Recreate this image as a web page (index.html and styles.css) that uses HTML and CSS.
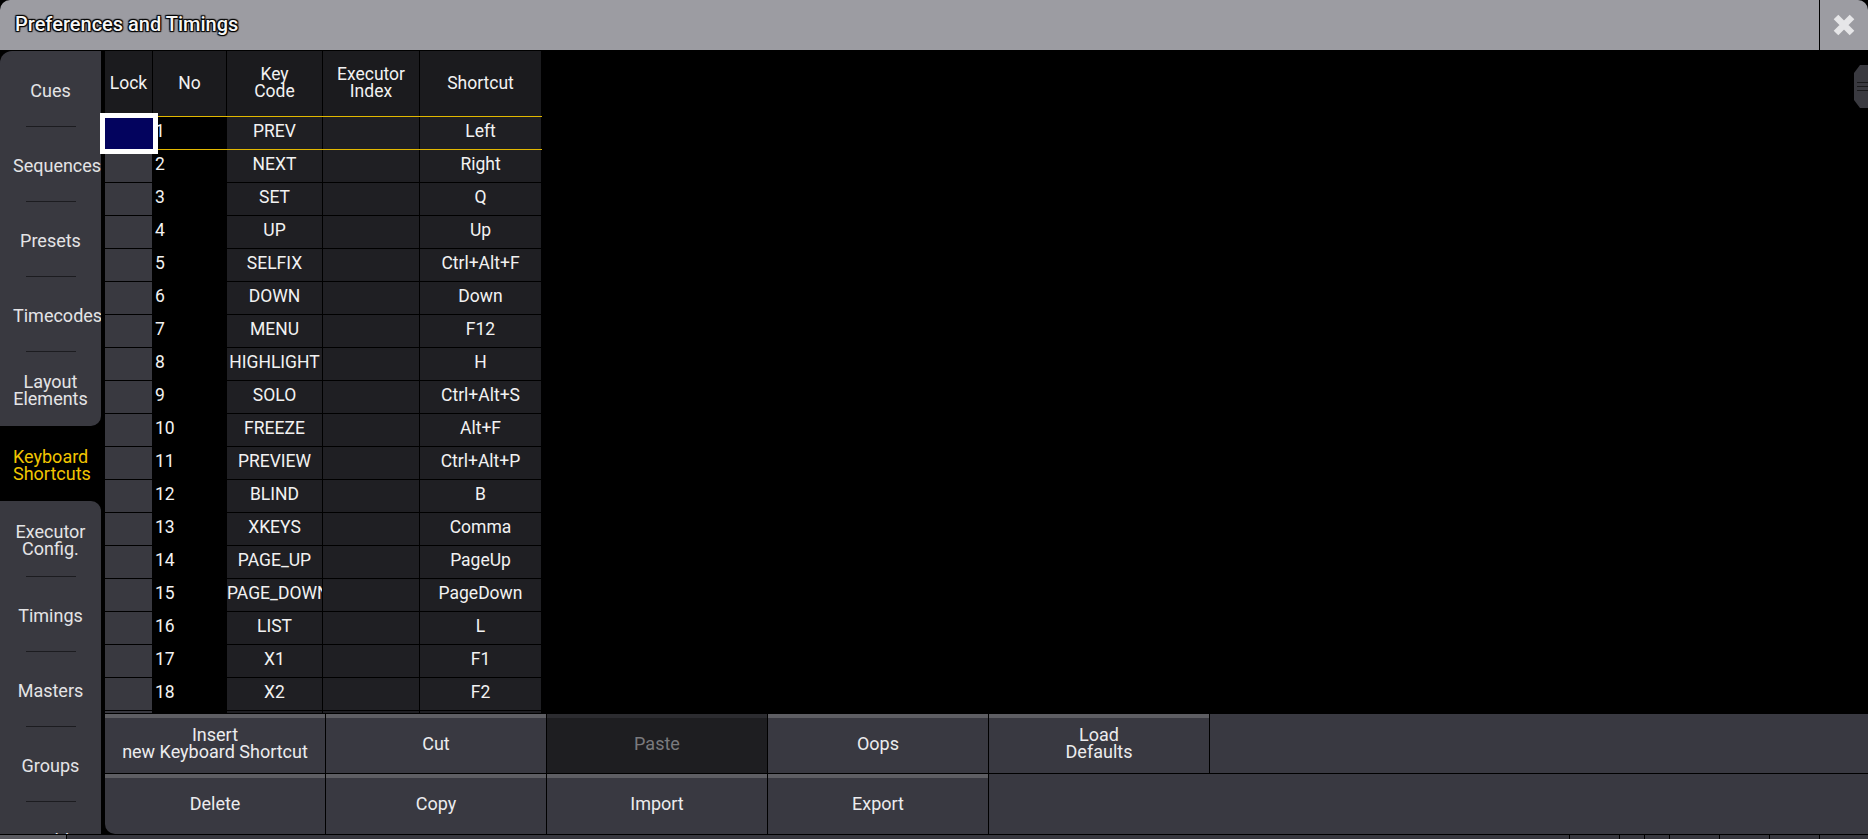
FILE: index.html
```html
<!DOCTYPE html>
<html lang="en">
<head>
    <meta charset="UTF-8">
    <title>Preferences and Timings</title>
    <link rel="stylesheet" href="styles.css">
</head>
<body>
<div class="window">
    <div class="titlebar">
        <h1 class="title">Preferences and Timings</h1>
        <a href="javascript:;" class="close">
            <svg width="24" height="24" viewBox="0 0 24 24">
                <path d="M4 4 L20 20 M20 4 L4 20" stroke="#e6e6e8" stroke-width="6.5" fill="none"/>
            </svg>
        </a>
    </div>

    <div class="main">
        <div class="tabs">
            <div class="tab-group upper">
                <div class="tab">Cues</div>
                <div class="tab">Sequences</div>
                <div class="tab">Presets</div>
                <div class="tab">Timecodes</div>
                <div class="tab">Layout<br>Elements</div>
            </div>
            <div class="tab active">Keyboard<br>Shortcuts</div>
            <div class="tab-group lower">
                <div class="tab">Executor<br>Config.</div>
                <div class="tab">Timings</div>
                <div class="tab">Masters</div>
                <div class="tab">Groups</div>
                <div class="tab">Worlds</div>
            </div>
        </div>

        <div class="content">
            <div class="sheet">
                <div class="grid">
                    <div class="row head">
                        <div class="cell">Lock</div>
                        <div class="cell">No</div>
                        <div class="cell">Key<br>Code</div>
                        <div class="cell">Executor<br>Index</div>
                        <div class="cell">Shortcut</div>
                    </div>
                    <div class="row selected">
                        <div class="cell lock"><span class="focus"></span></div>
                        <div class="cell no">1</div>
                        <div class="cell">PREV</div>
                        <div class="cell"></div>
                        <div class="cell">Left</div>
                    </div>
                    <div class="row">
                        <div class="cell lock"></div>
                        <div class="cell no">2</div>
                        <div class="cell">NEXT</div>
                        <div class="cell"></div>
                        <div class="cell">Right</div>
                    </div>
                    <div class="row">
                        <div class="cell lock"></div>
                        <div class="cell no">3</div>
                        <div class="cell">SET</div>
                        <div class="cell"></div>
                        <div class="cell">Q</div>
                    </div>
                    <div class="row">
                        <div class="cell lock"></div>
                        <div class="cell no">4</div>
                        <div class="cell">UP</div>
                        <div class="cell"></div>
                        <div class="cell">Up</div>
                    </div>
                    <div class="row">
                        <div class="cell lock"></div>
                        <div class="cell no">5</div>
                        <div class="cell">SELFIX</div>
                        <div class="cell"></div>
                        <div class="cell">Ctrl+Alt+F</div>
                    </div>
                    <div class="row">
                        <div class="cell lock"></div>
                        <div class="cell no">6</div>
                        <div class="cell">DOWN</div>
                        <div class="cell"></div>
                        <div class="cell">Down</div>
                    </div>
                    <div class="row">
                        <div class="cell lock"></div>
                        <div class="cell no">7</div>
                        <div class="cell">MENU</div>
                        <div class="cell"></div>
                        <div class="cell">F12</div>
                    </div>
                    <div class="row">
                        <div class="cell lock"></div>
                        <div class="cell no">8</div>
                        <div class="cell">HIGHLIGHT</div>
                        <div class="cell"></div>
                        <div class="cell">H</div>
                    </div>
                    <div class="row">
                        <div class="cell lock"></div>
                        <div class="cell no">9</div>
                        <div class="cell">SOLO</div>
                        <div class="cell"></div>
                        <div class="cell">Ctrl+Alt+S</div>
                    </div>
                    <div class="row">
                        <div class="cell lock"></div>
                        <div class="cell no">10</div>
                        <div class="cell">FREEZE</div>
                        <div class="cell"></div>
                        <div class="cell">Alt+F</div>
                    </div>
                    <div class="row">
                        <div class="cell lock"></div>
                        <div class="cell no">11</div>
                        <div class="cell">PREVIEW</div>
                        <div class="cell"></div>
                        <div class="cell">Ctrl+Alt+P</div>
                    </div>
                    <div class="row">
                        <div class="cell lock"></div>
                        <div class="cell no">12</div>
                        <div class="cell">BLIND</div>
                        <div class="cell"></div>
                        <div class="cell">B</div>
                    </div>
                    <div class="row">
                        <div class="cell lock"></div>
                        <div class="cell no">13</div>
                        <div class="cell">XKEYS</div>
                        <div class="cell"></div>
                        <div class="cell">Comma</div>
                    </div>
                    <div class="row">
                        <div class="cell lock"></div>
                        <div class="cell no">14</div>
                        <div class="cell">PAGE_UP</div>
                        <div class="cell"></div>
                        <div class="cell">PageUp</div>
                    </div>
                    <div class="row">
                        <div class="cell lock"></div>
                        <div class="cell no">15</div>
                        <div class="cell">PAGE_DOWN</div>
                        <div class="cell"></div>
                        <div class="cell">PageDown</div>
                    </div>
                    <div class="row">
                        <div class="cell lock"></div>
                        <div class="cell no">16</div>
                        <div class="cell">LIST</div>
                        <div class="cell"></div>
                        <div class="cell">L</div>
                    </div>
                    <div class="row">
                        <div class="cell lock"></div>
                        <div class="cell no">17</div>
                        <div class="cell">X1</div>
                        <div class="cell"></div>
                        <div class="cell">F1</div>
                    </div>
                    <div class="row">
                        <div class="cell lock"></div>
                        <div class="cell no">18</div>
                        <div class="cell">X2</div>
                        <div class="cell"></div>
                        <div class="cell">F2</div>
                    </div>
                    <div class="row">
                        <div class="cell lock"></div>
                        <div class="cell no">19</div>
                        <div class="cell">X3</div>
                        <div class="cell"></div>
                        <div class="cell">F3</div>
                    </div>
                </div>
                <div class="handle">
                    <i></i><i></i><i></i>
                </div>
            </div>

            <div class="actions">
                <div class="btn">Insert<br>new Keyboard Shortcut</div>
                <div class="btn">Cut</div>
                <div class="btn disabled">Paste</div>
                <div class="btn">Oops</div>
                <div class="btn">Load<br>Defaults</div>
                <div class="filler"></div>
                <div class="btn">Delete</div>
                <div class="btn">Copy</div>
                <div class="btn">Import</div>
                <div class="btn">Export</div>
                <div class="filler wide"></div>
            </div>
        </div>
    </div>

    <div class="statusbar">
        <span class="seg first"></span>
        <span class="seg grow"></span>
        <span class="seg w50"></span>
        <span class="seg w25"></span>
        <span class="seg w25"></span>
        <span class="seg w50"></span>
        <span class="seg w50"></span>
        <span class="seg w50"></span>
        <span class="seg w48"></span>
    </div>
</div>
</body>
</html>
```

FILE: styles.css
```css
* {
    margin: 0;
    padding: 0;
    box-sizing: border-box;
}

a {
    text-decoration: none;
}

body {
    background-color: #000;
    color: #ececee;
    font-family: Roboto, "Liberation Sans", sans-serif;
    font-size: 18px;
    overflow: hidden;
    -webkit-user-select: none;
    user-select: none;
}

.window {
    width: 1868px;
    height: 839px;
    display: flex;
    flex-direction: column;
}

/* title bar */
.titlebar {
    flex: none;
    height: 50px;
    display: flex;
    align-items: center;
    background-color: #9c9ca2;
    border-radius: 10px 10px 0 0;
}

.title {
    flex: 1;
    padding: 0 0 2px 15px;
    font-size: 20px;
    font-weight: 500;
    color: #f6f6f6;
    text-shadow: 0 0 2px #000, 1px 1px 1px #000, -1px -1px 1px #000, 1px -1px 1px #000, -1px 1px 1px #000;
}

.close {
    width: 49px;
    height: 50px;
    display: flex;
    align-items: center;
    justify-content: center;
    border-left: 1px solid #000;
}

/* body */
.main {
    flex: 1;
    min-height: 0;
    margin-top: 1px;
    display: flex;
    gap: 4px;
}

.tabs {
    width: 101px;
    flex: none;
    display: flex;
    flex-direction: column;
    overflow: hidden;
}

.tab-group {
    flex: none;
    background-color: #393940;
}

.tab-group.upper {
    border-radius: 12px 0 10px 0;
}

.tab-group.lower {
    flex: 1;
    min-height: 0;
    overflow: hidden;
    border-radius: 0 10px 0 0;
}

/* long labels spill to the right, like the console does */
.tab {
    position: relative;
    flex: none;
    height: 75px;
    padding: 3px 13px 0;
    display: flex;
    flex-direction: column;
    justify-content: center;
    text-align: center;
    white-space: nowrap;
    line-height: 17px;
    color: #e4e4e6;
}

.tab + .tab::before {
    content: "";
    position: absolute;
    top: 0;
    left: 26px;
    width: 50px;
    height: 1px;
    background-color: #1c1c20;
}

.tab.active {
    background-color: #000;
    color: #f2c500;
}

.content {
    flex: 1;
    min-width: 0;
    display: flex;
    flex-direction: column;
}

/* shortcut table; pulled left so the focus frame can overhang the lock column */
.sheet {
    position: relative;
    flex: none;
    height: 662px;
    margin-left: -5px;
    padding-left: 5px;
    overflow: hidden;
}

.grid {
    width: 437px;
    display: flex;
    flex-direction: column;
    gap: 1px;
}

.row {
    position: relative;
    display: grid;
    grid-template-columns: 47px 73px 95px 96px 121px;
    gap: 1px;
    width: 436px;
    height: 32px;
    flex: none;
    background-color: #000;
    font-size: 17.5px;
}

.row.head {
    height: 65px;
}

.cell {
    background-color: #1f1f23;
    color: #f2f2f2;
    text-align: center;
    line-height: 28px;
    padding-bottom: 4px;
    white-space: nowrap;
    overflow: hidden;
}

.head .cell {
    display: flex;
    align-items: center;
    justify-content: center;
    background-color: #1b1b1e;
    line-height: 17px;
    padding-bottom: 1px;
}

.cell.lock {
    background-color: #393940;
}

.cell.no {
    background-color: #000;
    text-align: left;
    padding-left: 2px;
}

.row.selected {
    box-shadow: 0 -1px 0 #e2b800, 0 1px 0 #e2b800;
    width: 437px;
}

.row.selected .cell.lock {
    overflow: visible;
}

.focus {
    position: absolute;
    left: -5px;
    top: -4px;
    width: 58px;
    height: 41px;
    border: 5px solid #fff;
    background-color: #03035e;
    z-index: 2;
}

.handle {
    position: absolute;
    top: 14px;
    right: 0;
    width: 14px;
    height: 43px;
    padding: 17px 0 0 3px;
    background-color: #3a3a40;
    clip-path: polygon(6px 0, 100% 0, 100% 100%, 6px 100%, 0 calc(100% - 8px), 0 8px);
}

.handle i {
    display: block;
    height: 1px;
    margin-bottom: 3px;
    background-color: #1a1a1c;
}

/* button strip */
.actions {
    flex: 1;
    margin-top: 1px;
    display: grid;
    grid-template-columns: repeat(5, 220px) 1fr;
    grid-template-rows: 59px 60px;
    gap: 1px;
    background-color: #000;
    border-radius: 0 0 0 10px;
    overflow: hidden;
}

.btn {
    display: flex;
    align-items: center;
    justify-content: center;
    text-align: center;
    line-height: 17px;
    padding-bottom: 5px;
    background-color: #393941;
    border-top: 4px solid #5e5e63;
    color: #ececee;
}

.btn.disabled {
    background-color: #1e1e21;
    border-top-color: #2c2c30;
    color: #7a7a7e;
}

.filler {
    background-color: #393941;
}

.filler.wide {
    grid-column: 5 / 7;
}

/* status bar */
.statusbar {
    flex: none;
    height: 5px;
    display: flex;
    gap: 1px;
    border-top: 1px solid #000;
}

.seg {
    background-color: #38383f;
}

.seg.first {
    width: 66px;
    background-color: #5a5a60;
}

.seg.grow {
    flex: 1;
}

.seg.w50 {
    width: 49px;
}

.seg.w25 {
    width: 24px;
}

.seg.w48 {
    width: 48px;
}
```
